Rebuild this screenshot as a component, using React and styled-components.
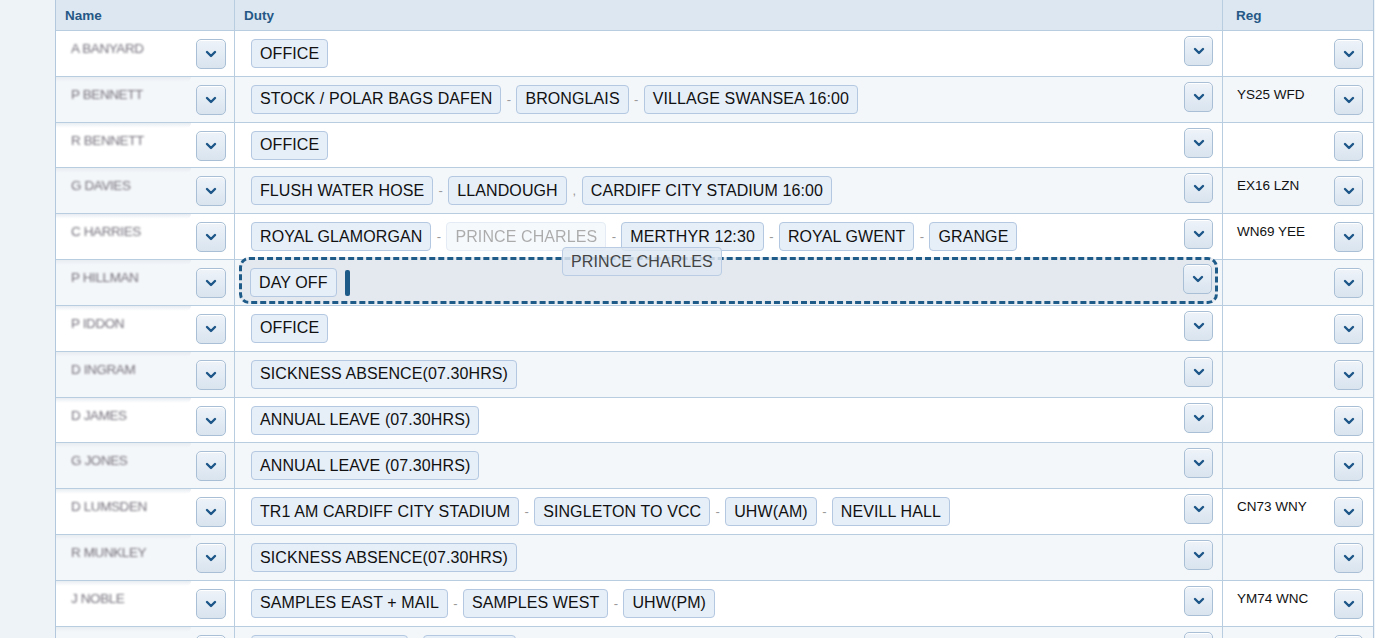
import styled, { createGlobalStyle } from "styled-components";

const GlobalStyle = createGlobalStyle`
  html, body {
    margin: 0;
    padding: 0;
    background: #eef3f8;
    font-family: "Liberation Sans", Arial, sans-serif;
    overflow: hidden;
  }
`;

const Page = styled.div`
  padding-left: 55px;
  height: 638px;
  overflow: hidden;
`;

const Table = styled.div`
  width: 1317px;
  background: #ffffff;
  border-left: 1px solid #b3c8dc;
  border-right: 1px solid #b3c8dc;
`;

const Row = styled.div`
  display: grid;
  grid-template-columns: 179px 988px 149px;
  height: 44.83px;
  border-bottom: 1px solid #b9cde0;
  background: ${(p) => (p.$alt ? "#f4f7fa" : "#ffffff")};
  position: relative;
`;

const HeadRow = styled(Row)`
  height: 30px;
  background: #dde7f1;
`;

const HeadCell = styled.div`
  display: flex;
  align-items: center;
  padding-left: ${(p) => p.$pad || 9}px;
  font-size: 13.5px;
  font-weight: 700;
  color: #255886;
  border-right: ${(p) => (p.$last ? "none" : "1px solid #b9cde0")};
`;

const NameCell = styled.div`
  display: flex;
  border-right: 1px solid #b9cde0;
`;

const NameBox = styled.div`
  width: 135px;
  position: relative;
  padding: 8px 0 0 15px;
  box-sizing: border-box;
  &::before {
    content: "";
    position: absolute;
    left: 0;
    right: 0;
    top: 0;
    height: 5px;
    border-radius: 0 0 6px 0;
    background: ${(p) =>
      p.$first ? "transparent" : "linear-gradient(#e8edf2, rgba(232,237,242,0))"};
  }
`;

const Name = styled.span`
  font-size: 13.5px;
  color: #75717b;
  letter-spacing: -0.4px;
  filter: blur(1px);
`;

const DropButton = styled.button`
  width: ${(p) => p.$w || 30}px;
  height: 30px;
  margin-top: ${(p) => p.$top || 8}px;
  margin-left: ${(p) => p.$ml || 0}px;
  padding: 0;
  display: flex;
  align-items: center;
  justify-content: center;
  flex-shrink: 0;
  border: 1px solid #a9bfd5;
  border-radius: 5px;
  background: linear-gradient(#eef3f9, #d9e4ef);
  box-shadow: inset 0 1px 0 #ffffff;
  cursor: pointer;
`;

const DutyCell = styled.div`
  display: flex;
  align-items: flex-start;
  padding: 0 9px 0 16px;
  border-right: 1px solid #b9cde0;
  min-width: 0;
`;

const Tags = styled.div`
  display: flex;
  align-items: center;
  height: 29px;
  margin-top: 8px;
  flex: 1;
`;

const Tag = styled.span`
  display: inline-flex;
  align-items: center;
  height: 29px;
  width: ${(p) => (p.$w ? `${p.$w}px` : "auto")};
  box-sizing: border-box;
  padding: 0 8px;
  font-size: 16px;
  letter-spacing: 0.1px;
  color: #111111;
  background: #e6eef8;
  border: 1px solid #b4c8e1;
  border-radius: 4px;
  white-space: nowrap;
  opacity: ${(p) => (p.$faded ? 0.35 : 1)};
`;

const Sep = styled.span`
  width: 15px;
  text-align: center;
  font-size: 13px;
  color: #999999;
`;

const DropZone = styled.div`
  flex: 1;
  display: flex;
  align-items: flex-start;
  margin: -3px -5px 0 -12px;
  padding: 0 3px 0 8px;
  height: 47px;
  box-sizing: border-box;
  border: 3px dashed #1f5b88;
  border-radius: 10px;
  background: #e4e9ef;
`;

const Caret = styled.span`
  width: 5px;
  height: 26px;
  margin-left: 8px;
  border-radius: 2px;
  background: #1f5b88;
`;

const Ghost = styled.div`
  position: absolute;
  left: 506px;
  top: -13px;
  height: 29px;
  box-sizing: border-box;
  padding: 0 8px;
  display: flex;
  align-items: center;
  font-size: 16px;
  letter-spacing: 0.1px;
  color: #444444;
  background: rgba(222, 231, 242, 0.85);
  border: 1px solid #b9cce3;
  border-radius: 4px;
  white-space: nowrap;
  pointer-events: none;
  z-index: 2;
`;

const RegCell = styled.div`
  display: flex;
  align-items: flex-start;
  padding: 0 9px 0 14px;
`;

const RegText = styled.span`
  flex: 1;
  margin-top: 10px;
  font-size: 13.5px;
  color: #111111;
`;

function Chevron() {
  return (
    <svg width="12" height="8" viewBox="0 0 12 8">
      <path
        d="M2 2l4 4 4-4"
        fill="none"
        stroke="#1d5688"
        strokeWidth="2.4"
        strokeLinecap="round"
        strokeLinejoin="round"
      />
    </svg>
  );
}

const rows = [
  { name: "A BANYARD", duty: [["OFFICE"]] },
  {
    name: "P BENNETT",
    duty: [["STOCK / POLAR BAGS DAFEN"], ["BRONGLAIS", "-"], ["VILLAGE SWANSEA 16:00", "-"]],
    reg: "YS25 WFD",
  },
  { name: "R BENNETT", duty: [["OFFICE"]] },
  {
    name: "G DAVIES",
    duty: [["FLUSH WATER HOSE"], ["LLANDOUGH", "-"], ["CARDIFF CITY STADIUM 16:00", ","]],
    reg: "EX16 LZN",
  },
  {
    name: "C HARRIES",
    duty: [
      ["ROYAL GLAMORGAN"],
      ["PRINCE CHARLES", "-", true],
      ["MERTHYR 12:30", "-"],
      ["ROYAL GWENT", "-"],
      ["GRANGE", "-"],
    ],
    reg: "WN69 YEE",
  },
  { name: "P HILLMAN", duty: [["DAY OFF"]], drop: true },
  { name: "P IDDON", duty: [["OFFICE"]] },
  { name: "D INGRAM", duty: [["SICKNESS ABSENCE(07.30HRS)"]] },
  { name: "D JAMES", duty: [["ANNUAL LEAVE (07.30HRS)"]] },
  { name: "G JONES", duty: [["ANNUAL LEAVE (07.30HRS)"]] },
  {
    name: "D LUMSDEN",
    duty: [
      ["TR1 AM CARDIFF CITY STADIUM"],
      ["SINGLETON TO VCC", "-"],
      ["UHW(AM)", "-"],
      ["NEVILL HALL", "-"],
    ],
    reg: "CN73 WNY",
  },
  { name: "R MUNKLEY", duty: [["SICKNESS ABSENCE(07.30HRS)"]] },
  {
    name: "J NOBLE",
    duty: [["SAMPLES EAST + MAIL"], ["SAMPLES WEST", "-"], ["UHW(PM)", "-"]],
    reg: "YM74 WNC",
  },
  // next row is only just in view: its tag tops show, its text does not
  { name: "", key: "next", duty: [["", null, false, 157], ["", "", false, 93]] },
];

function TagList({ duty }) {
  return duty.map(([label, sep, faded, w], i) => (
    <span key={i} style={{ display: "contents" }}>
      {sep !== undefined && sep !== null && <Sep>{sep}</Sep>}
      <Tag $faded={faded} $w={w}>
        {label}
      </Tag>
    </span>
  ));
}

export default function App() {
  return (
    <Page>
      <GlobalStyle />
      <Table>
        <HeadRow>
          <HeadCell $pad={9}>Name</HeadCell>
          <HeadCell $pad={9}>Duty</HeadCell>
          <HeadCell $pad={13} $last>
            Reg
          </HeadCell>
        </HeadRow>
        {rows.map((r, i) => (
          <Row key={r.key || r.name} $alt={i % 2 === 1}>
            <NameCell>
              <NameBox $first={i === 0}>
                <Name>{r.name}</Name>
              </NameBox>
              <DropButton $ml={5}>
                <Chevron />
              </DropButton>
            </NameCell>
            <DutyCell>
              {r.drop ? (
                <DropZone>
                  <Tags>
                    <TagList duty={r.duty} />
                    <Caret />
                  </Tags>
                  <DropButton $top={4} $w={29}>
                    <Chevron />
                  </DropButton>
                  <Ghost>PRINCE CHARLES</Ghost>
                </DropZone>
              ) : (
                <>
                  <Tags>
                    <TagList duty={r.duty} />
                  </Tags>
                  <DropButton $top={5} $w={29}>
                    <Chevron />
                  </DropButton>
                </>
              )}
            </DutyCell>
            <RegCell>
              <RegText>{r.reg}</RegText>
              <DropButton $top={8} $w={29}>
                <Chevron />
              </DropButton>
            </RegCell>
          </Row>
        ))}
      </Table>
    </Page>
  );
}
